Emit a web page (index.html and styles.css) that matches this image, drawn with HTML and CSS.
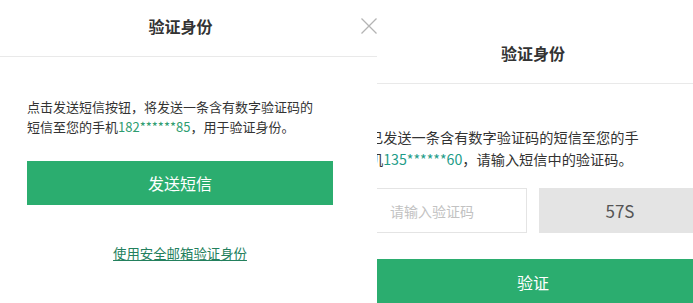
FILE: index.html
```html
<!DOCTYPE html>
<html lang="zh-CN">
<head>
<meta charset="utf-8">
<title>验证身份</title>
<link rel="stylesheet" href="styles.css">
</head>
<body>
<div class="stage">
  <section class="dialog dialog-send">
    <header class="dlg-head">
      <h2 class="dlg-title">验证身份</h2>
      <svg class="close" width="16" height="16" viewBox="0 0 16 16" aria-label="关闭">
        <path d="M0.5 0.5 L15.5 15.5 M15.5 0.5 L0.5 15.5" stroke="#b4b4b4" stroke-width="1.3" fill="none"/>
      </svg>
    </header>
    <div class="dlg-body">
      <p class="desc">点击发送短信按钮，将发送一条含有数字验证码的<br>短信至您的手机<span class="phone">182******85</span>，用于验证身份。</p>
      <button class="btn-green btn-send">发送短信</button>
      <div class="alt"><a class="alt-link" href="#">使用安全邮箱验证身份</a></div>
    </div>
  </section>
  <section class="clip">
    <div class="dialog dialog-verify">
      <header class="dlg-head">
        <h2 class="dlg-title">验证身份</h2>
      </header>
      <div class="verify-body">
        <p class="desc2">已发送一条含有数字验证码的短信至您的手<br>机<span class="phone2">135******60</span>，请输入短信中的验证码。</p>
        <div class="code-row">
          <input class="code-input" type="text" placeholder="请输入验证码">
          <div class="countdown">57S</div>
        </div>
        <button class="btn-green btn-verify">验证</button>
      </div>
    </div>
  </section>
</div>
</body>
</html>
```
FILE: styles.css
```css
* { box-sizing: border-box; }
html, body { margin: 0; padding: 0; background: #fff; }
body {
  font-family: "Noto Sans CJK SC", "Noto Sans", sans-serif;
  color: #333;
  width: 693px;
  height: 303px;
  overflow: hidden;
}
.stage {
  display: flex;
  height: 303px;
}
.dialog-send {
  width: 377px;
  flex: none;
  background: #fff;
}
.dlg-head {
  height: 57px;
  padding-bottom: 4px;
  border-bottom: 1px solid #e9e9e9;
  display: flex;
  align-items: center;
}
.dlg-title {
  flex: 1;
  margin: 0;
  text-align: center;
  font-size: 16px;
  font-weight: bold;
  color: #333;
  line-height: 22px;
}
.close { flex: none; display: block; }
.dlg-body { padding-left: 27px; }
.desc {
  margin: 40px 0 0;
  font-size: 13px;
  line-height: 20px;
  white-space: nowrap;
  color: #333;
}
.phone { color: #2e9d70; }
.btn-green {
  display: block;
  border: 0;
  padding: 0;
  background: #2bad6f;
  color: #fff;
  font-family: inherit;
  font-size: 16px;
  cursor: pointer;
}
.btn-send {
  width: 306px;
  height: 44px;
  margin-top: 24px;
}
.alt {
  width: 306px;
  margin-top: 37px;
  text-align: center;
  line-height: 20px;
}
.alt-link {
  font-size: 13.4px;
  color: #23805d;
  text-decoration: underline;
}
.clip {
  flex: 1;
  overflow: hidden;
  height: 303px;
}
.dialog-verify {
  width: 336px;
  margin-left: -12px;
  padding-top: 27px;
}
.desc2 {
  margin: 42px 0 0;
  padding-left: 4px;
  font-size: 14.2px;
  line-height: 22px;
  white-space: nowrap;
  color: #333;
}
.phone2 { color: #1d9c88; }
.code-row {
  display: flex;
  gap: 12px;
  margin-top: 18px;
}
.code-input {
  width: 162px;
  height: 45px;
  border: 1px solid #e4e4e4;
  padding: 0 0 0 24px;
  font-family: inherit;
  font-size: 14px;
  color: #333;
  outline: none;
}
.code-input::placeholder { color: #c2c2c2; }
.countdown {
  width: 162px;
  height: 45px;
  background: #e4e4e4;
  color: #555;
  font-size: 17px;
  display: flex;
  align-items: center;
  justify-content: center;
}
.btn-verify {
  width: 336px;
  height: 46px;
  margin-top: 26px;
}
```
